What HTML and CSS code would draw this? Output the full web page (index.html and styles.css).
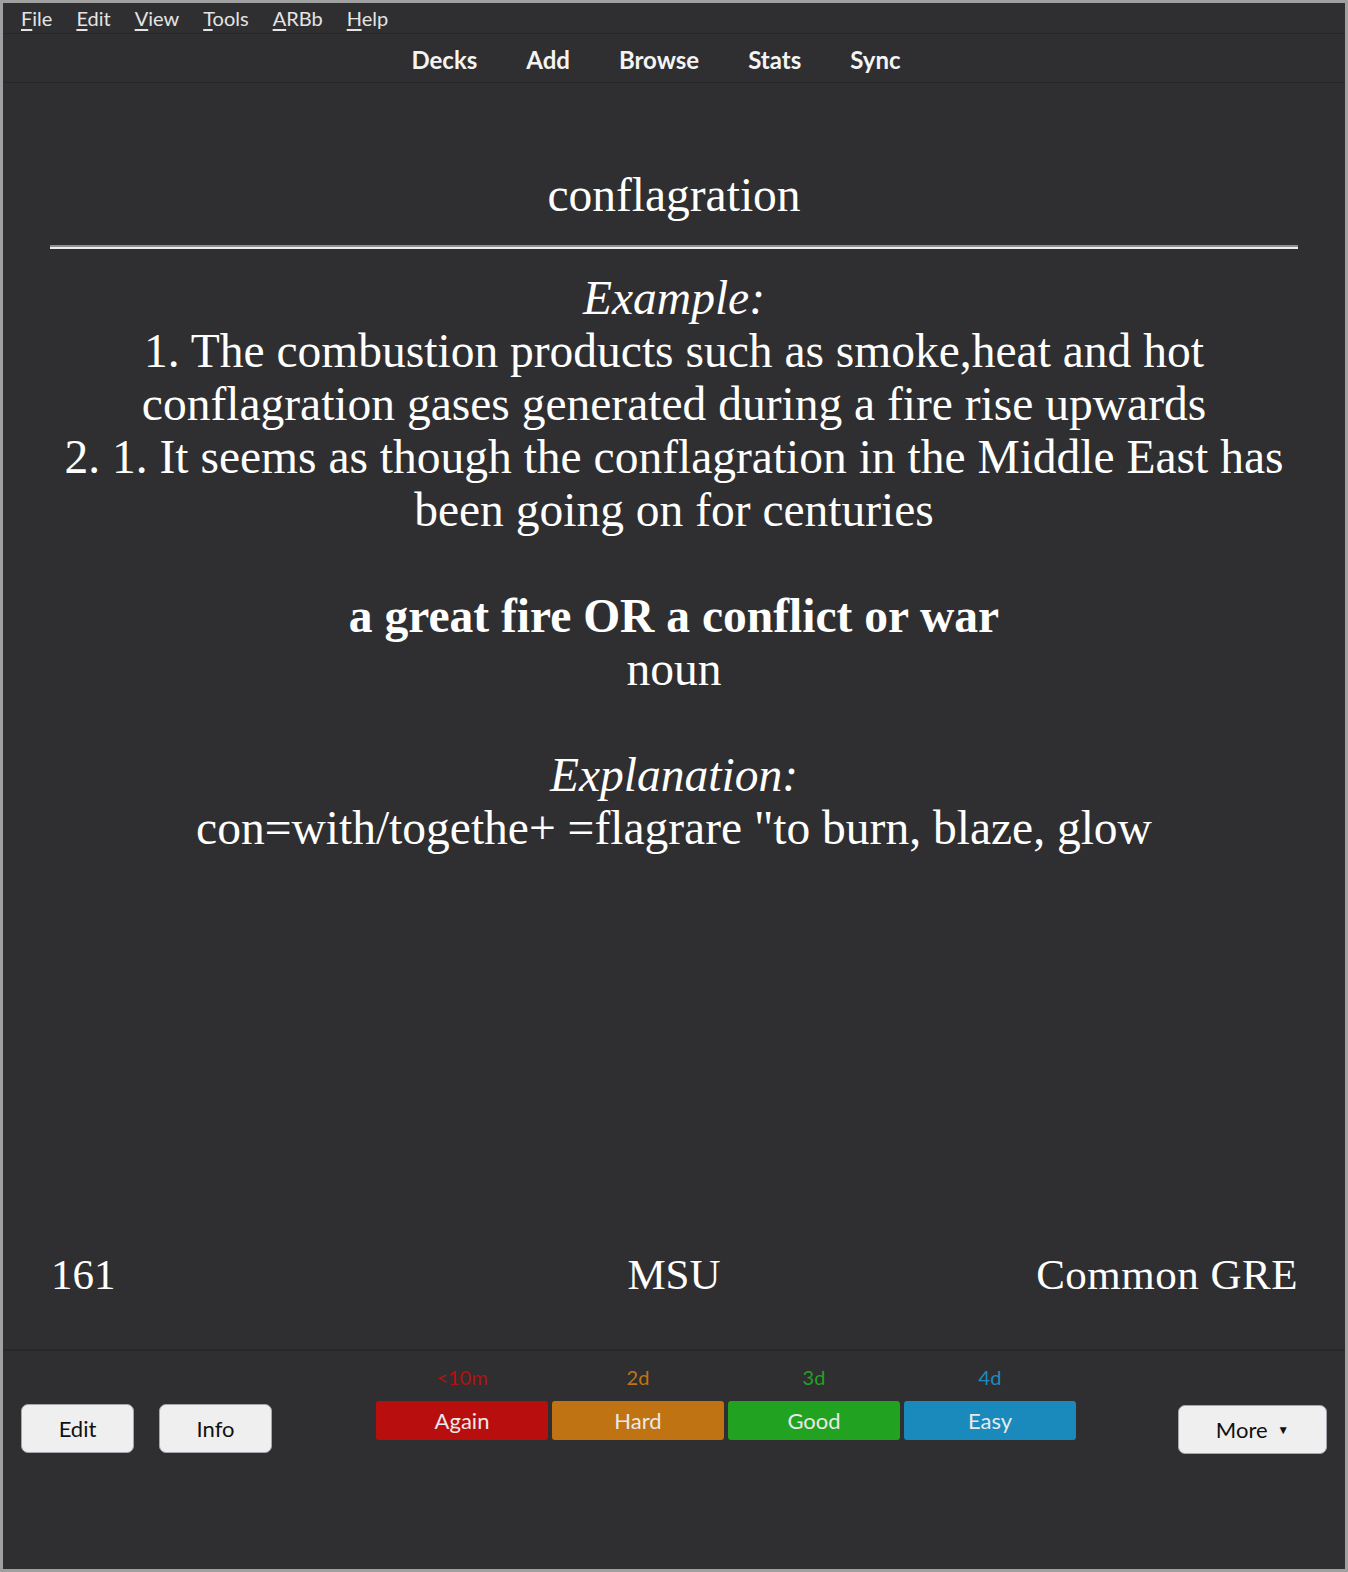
FILE: index.html
```html
<!DOCTYPE html>
<html lang="en">
<head>
<meta charset="utf-8">
<title>Anki</title>
<link rel="stylesheet" href="styles.css">
</head>
<body>
<nav class="menubar">
  <span class="menu-item"><span class="mn">F</span>ile</span>
  <span class="menu-item"><span class="mn">E</span>dit</span>
  <span class="menu-item"><span class="mn">V</span>iew</span>
  <span class="menu-item"><span class="mn">T</span>ools</span>
  <span class="menu-item"><span class="mn">A</span>RBb</span>
  <span class="menu-item"><span class="mn">H</span>elp</span>
</nav>
<header class="toolbar">
  <span class="tb-link">Decks</span>
  <span class="tb-link">Add</span>
  <span class="tb-link">Browse</span>
  <span class="tb-link">Stats</span>
  <span class="tb-link">Sync</span>
</header>
<main class="card">
  <div class="card-body">
    <div class="word">conflagration</div>
    <hr class="divider">
    <div class="back"><i>Example:</i><br>1. The combustion products such as smoke,heat and hot conflagration gases generated during a fire rise upwards<br>2. 1. It seems as though the conflagration in the Middle East has been going on for centuries<br><br><b>a great fire OR a conflict or war</b><br>noun<br><br><i>Explanation:</i><br>con=with/togethe+ =flagrare "to burn, blaze, glow</div>
  </div>
  <div class="card-footer">
    <span class="f-left">161</span>
    <span class="f-mid">MSU</span>
    <span class="f-right">Common GRE</span>
  </div>
</main>
<footer class="bottombar">
  <div class="bb-left">
    <button class="btn">Edit</button>
    <button class="btn">Info</button>
  </div>
  <div class="bb-mid">
    <div class="ans">
      <span class="due due-again">&lt;10m</span>
      <span class="ansbtn again">Again</span>
    </div>
    <div class="ans">
      <span class="due due-hard">2d</span>
      <span class="ansbtn hard">Hard</span>
    </div>
    <div class="ans">
      <span class="due due-good">3d</span>
      <span class="ansbtn good">Good</span>
    </div>
    <div class="ans">
      <span class="due due-easy">4d</span>
      <span class="ansbtn easy">Easy</span>
    </div>
  </div>
  <div class="bb-right">
    <button class="btn btn-more">More <span class="caret">&#9660;</span></button>
  </div>
</footer>
</body>
</html>
```

FILE: styles.css
```css
html, body {
  margin: 0;
  padding: 0;
}
body {
  box-sizing: border-box;
  width: 1348px;
  height: 1572px;
  border: 3px solid #a0a0a0;
  background: #2f2f31;
  display: flex;
  flex-direction: column;
  font-family: Lato, "Open Sans", sans-serif;
  color: #e8e8e8;
  overflow: hidden;
}

/* menu bar */
.menubar {
  height: 30px;
  border-bottom: 1px solid #272729;
  display: flex;
  align-items: center;
  gap: 24px;
  padding-left: 18px;
  font-size: 20px;
  line-height: 30px;
  color: #e4e4e4;
}
.mn {
  text-decoration: underline;
  text-decoration-thickness: 1.5px;
  text-underline-offset: 3px;
}

/* toolbar */
.toolbar {
  box-sizing: border-box;
  height: 49px;
  border-bottom: 1px solid #272729;
  display: flex;
  justify-content: center;
  align-items: center;
  gap: 49px;
  padding-right: 36px;
  padding-top: 2px;
}
.tb-link {
  font-weight: 700;
  font-size: 24px;
  color: #f4f4f4;
}

/* card */
.card {
  flex: 1;
  display: flex;
  flex-direction: column;
  padding: 86px 47px 48px 47px;
  font-family: "Liberation Serif", "Times New Roman", serif;
  font-size: 47.5px;
  line-height: 53px;
  color: #ffffff;
  text-align: center;
}
.divider {
  height: 0;
  margin: 23px 0 23px;
  border: 0;
  border-top: 2px solid #8e8e8e;
  border-bottom: 2px solid #ececec;
}
.card-footer {
  margin-top: auto;
  display: grid;
  grid-template-columns: 1fr auto 1fr;
  font-size: 43px;
}
.f-left { text-align: left; padding-left: 1px; }
.f-right { text-align: right; letter-spacing: 0.5px; }

/* bottom bar */
.bottombar {
  height: 218px;
  border-top: 2px solid #28282a;
  display: grid;
  grid-template-columns: 373px 700px 1fr;
  align-items: start;
}
.bb-left {
  display: flex;
  gap: 25px;
  padding: 53px 0 0 18px;
}
.btn {
  box-sizing: border-box;
  width: 113px;
  height: 49px;
  border: 1.5px solid #a6a6ae;
  border-radius: 7px;
  background: #efefef;
  color: #111;
  font-family: Lato, "Open Sans", sans-serif;
  font-size: 22px;
  padding: 0;
}
.bb-mid {
  display: flex;
  gap: 4px;
  padding-top: 14px;
}
.ans {
  width: 172px;
  display: flex;
  flex-direction: column;
  align-items: center;
}
.due {
  font-size: 20px;
  line-height: 24px;
  margin-bottom: 12px;
}
.due-again { color: #b50f0f; }
.due-hard { color: #c07412; }
.due-good { color: #22a122; }
.due-easy { color: #1d8bbe; }
.ansbtn {
  width: 100%;
  height: 39px;
  line-height: 39px;
  border-radius: 3px;
  font-size: 22px;
  color: #e9e9e9;
  text-align: center;
}
.again { background: #b90e0e; }
.hard { background: #c07312; }
.good { background: #21a221; }
.easy { background: #1a8abd; }
.bb-right {
  display: flex;
  justify-content: flex-end;
  padding: 54px 18px 0 0;
}
.btn-more {
  width: 149px;
}
.caret {
  font-size: 12px;
  vertical-align: 4px;
  margin-left: 4px;
}
```
